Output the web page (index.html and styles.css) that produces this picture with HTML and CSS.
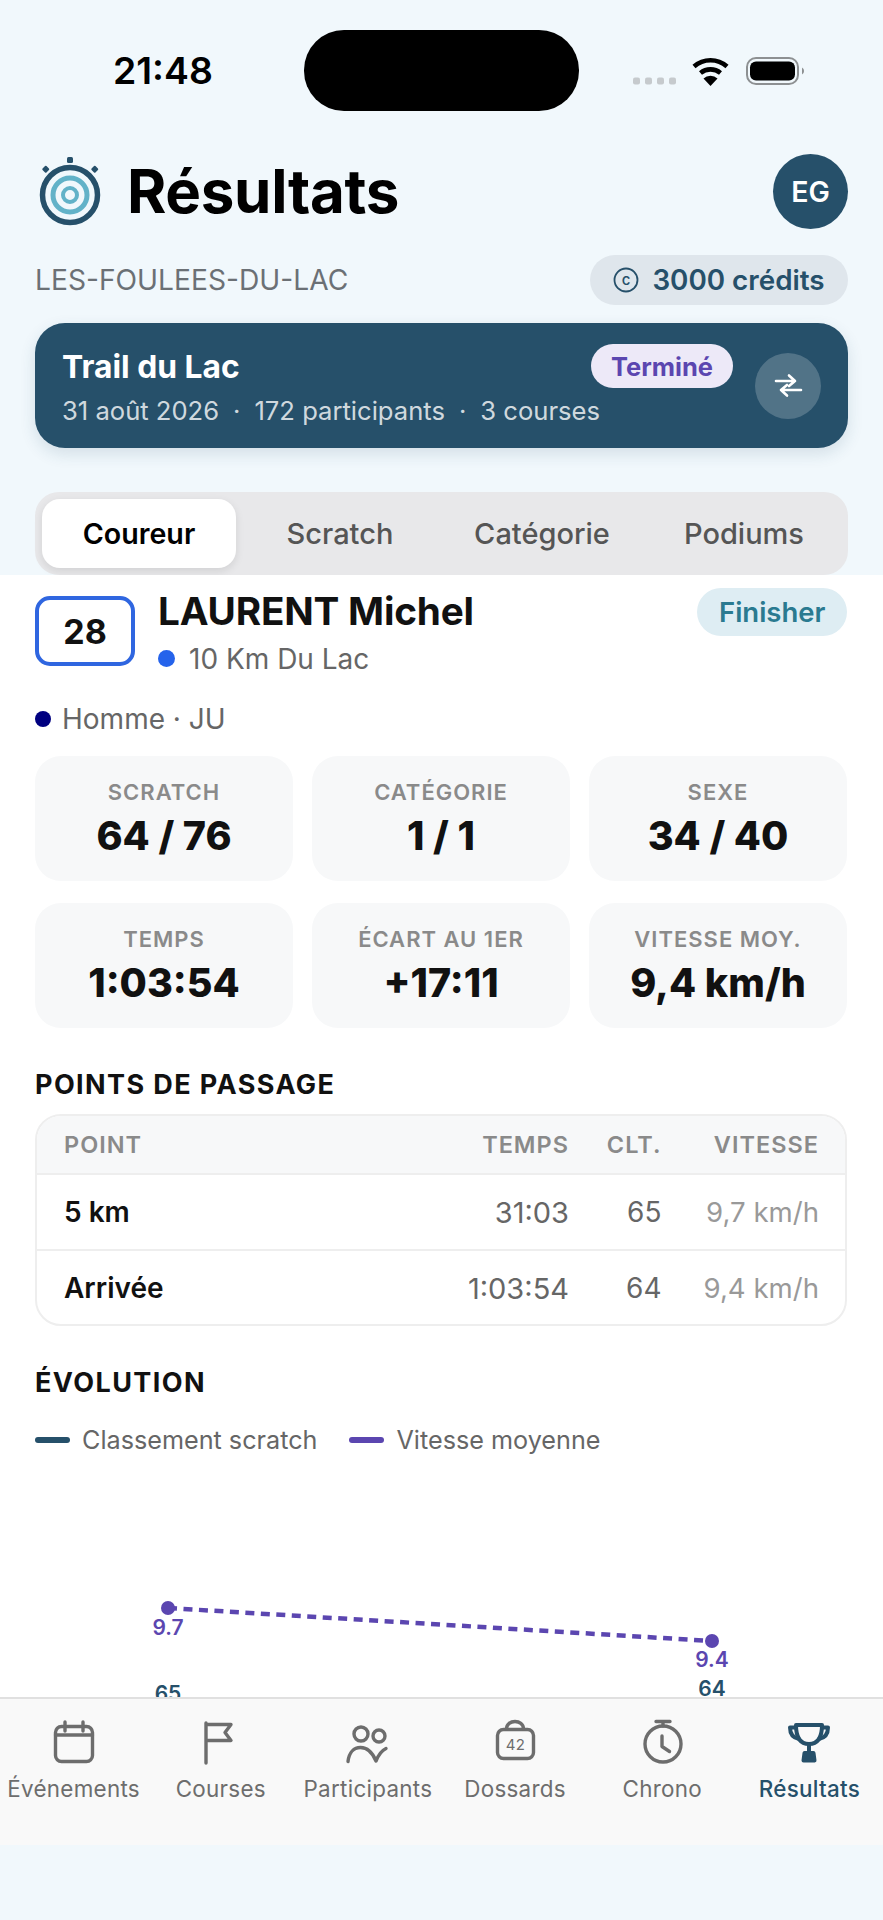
FILE: index.html
```html
<!DOCTYPE html>
<html lang="fr">
<head>
<meta charset="utf-8">
<title>Résultats</title>
<link rel="stylesheet" href="styles.css">
</head>
<body>
<div class="phone">
  <div class="island"></div>
  <section class="top">
    <div class="status">
      <span class="time">21:48</span>
      <svg class="status-icons" viewBox="630 50 180 40" width="180" height="40">
        <g fill="#c6cacd"><rect x="633" y="77.5" width="7" height="7" rx="2"/><rect x="645" y="77.5" width="7" height="7" rx="2"/><rect x="657" y="77.5" width="7" height="7" rx="2"/><rect x="669" y="77.5" width="7" height="7" rx="2"/></g>
        <g fill="none" stroke="#000" stroke-width="4.6"><path d="M694 66.5a25 25 0 0 1 33 0"/><path d="M700.5 73a15.5 15.5 0 0 1 20 0"/></g>
        <path d="M703.5 78.5a10 10 0 0 1 14 0L710.5 86z" fill="#000"/>
        <rect x="747" y="58" width="51" height="26" rx="9" fill="none" stroke="#8d9092" stroke-width="2"/>
        <rect x="750" y="61.500" width="45" height="19" rx="6" fill="#000"/>
        <path d="M802 67.500a4 4 0 0 1 0 7z" fill="#8d9092"/>
      </svg>
    </div>
    <header class="head">
      <svg class="logo" viewBox="35 150 70 80" width="70" height="80">
        <circle cx="70" cy="195" r="27.500" fill="none" stroke="#26506a" stroke-width="5.500"/>
        <circle cx="70" cy="195" r="17" fill="none" stroke="#62b2c8" stroke-width="5"/>
        <circle cx="70" cy="195" r="7" fill="none" stroke="#62b2c8" stroke-width="4"/>
        <rect x="67" y="157" width="6" height="6" rx="1.500" fill="#26506a"/>
        <rect x="43" y="166.500" width="5.500" height="5.500" rx="1" fill="#26506a" transform="rotate(45 45.750 169.250)"/>
        <rect x="92" y="166.500" width="5.500" height="5.500" rx="1" fill="#26506a" transform="rotate(45 94.750 169.250)"/>
      </svg>
      <h1 class="title">Résultats</h1>
      <div class="avatar">EG</div>
    </header>
    <div class="meta">
      <span class="slug">LES-FOULEES-DU-LAC</span>
      <span class="credits">
        <svg viewBox="0 0 26 26" width="26" height="26"><circle cx="13" cy="13" r="11.500" fill="none" stroke="#26506a" stroke-width="1.800"/><text x="13" y="18" text-anchor="middle" class="credit-c">c</text></svg>
        3000 crédits
      </span>
    </div>
    <div class="event">
      <div class="event-main">
        <div class="event-row">
          <span class="event-name">Trail du Lac</span>
          <span class="event-state">Terminé</span>
        </div>
        <div class="event-sub"><span>31 août 2026</span><span>·</span><span>172 participants</span><span>·</span><span>3 courses</span></div>
      </div>
      <div class="swap">
        <svg viewBox="0 0 30 26" width="30" height="26" fill="none" stroke="#fff" stroke-width="2.600" stroke-linecap="round" stroke-linejoin="round"><path d="M3 8h19M16 2.500l6 5.500-6 5"/><path d="M28 17H8M14 12l-6 5 6 5.500"/></svg>
      </div>
    </div>
    <nav class="tabs">
      <span class="tab active">Coureur</span>
      <span class="tab">Scratch</span>
      <span class="tab">Catégorie</span>
      <span class="tab">Podiums</span>
    </nav>
  </section>

  <main class="content">
    <div class="runner">
      <div class="bib">28</div>
      <div class="runner-info">
        <div class="runner-name">LAURENT Michel</div>
        <div class="runner-course"><i class="dot dot-blue"></i>10 Km Du Lac</div>
      </div>
      <span class="finisher">Finisher</span>
    </div>
    <div class="gender"><i class="dot dot-navy"></i>Homme · JU</div>

    <div class="stats">
      <div class="stat"><div class="stat-label">SCRATCH</div><div class="stat-value">64 / 76</div></div>
      <div class="stat"><div class="stat-label">CATÉGORIE</div><div class="stat-value">1 / 1</div></div>
      <div class="stat"><div class="stat-label">SEXE</div><div class="stat-value">34 / 40</div></div>
      <div class="stat"><div class="stat-label">TEMPS</div><div class="stat-value">1:03:54</div></div>
      <div class="stat"><div class="stat-label">ÉCART AU 1ER</div><div class="stat-value">+17:11</div></div>
      <div class="stat"><div class="stat-label">VITESSE MOY.</div><div class="stat-value">9,4 km/h</div></div>
    </div>

    <h2 class="section section-points">POINTS DE PASSAGE</h2>
    <div class="table">
      <div class="tr th"><span class="c1">POINT</span><span class="c2">TEMPS</span><span class="c3">CLT.</span><span class="c4">VITESSE</span></div>
      <div class="tr"><span class="c1">5 km</span><span class="c2">31:03</span><span class="c3">65</span><span class="c4">9,7 km/h</span></div>
      <div class="tr"><span class="c1">Arrivée</span><span class="c2">1:03:54</span><span class="c3">64</span><span class="c4">9,4 km/h</span></div>
    </div>

    <h2 class="section section-evo">ÉVOLUTION</h2>
    <div class="legend">
      <span class="legend-item"><i class="swatch swatch-rank"></i>Classement scratch</span>
      <span class="legend-item"><i class="swatch swatch-speed"></i>Vitesse moyenne</span>
    </div>
    <svg class="chart" viewBox="36 1470 811 240" width="811" height="240">
      <line x1="169" y1="1608" x2="713" y2="1641" class="speed-line"/>
      <circle cx="169" cy="1608" r="7" class="speed-dot"/>
      <circle cx="713" cy="1641" r="7" class="speed-dot"/>
      <text x="169" y="1635" class="speed-label">9.7</text>
      <text x="713" y="1667" class="speed-label">9.4</text>
      <text x="169" y="1701" class="rank-label">65</text>
      <text x="713" y="1696" class="rank-label">64</text>
    </svg>
  </main>

  <nav class="bottom">
    <div class="nav-item">
      <svg viewBox="46 1716 56 48" width="56" height="48" class="nav-icon"><rect x="55.500" y="1725.500" width="37" height="35" rx="6"/><path d="M55.500 1734h37M65 1721v9M83 1721v9"/></svg>
      <span>Événements</span>
    </div>
    <div class="nav-item">
      <svg viewBox="193 1716 56 48" width="56" height="48" class="nav-icon"><path d="M206 1722v40M206 1723.500h25l-6 8 6 8h-25"/></svg>
      <span>Courses</span>
    </div>
    <div class="nav-item">
      <svg viewBox="340 1716 56 48" width="56" height="48" class="nav-icon"><circle cx="361" cy="1733" r="7"/><circle cx="379" cy="1735" r="6"/><path d="M348 1760.500c1-9 6-14 12.500-14s12 5 15.500 13.500c2-5 5-10 10-12.500"/></svg>
      <span>Participants</span>
    </div>
    <div class="nav-item">
      <svg viewBox="487 1716 56 48" width="56" height="48" class="nav-icon"><rect x="497.500" y="1728.500" width="36" height="29" rx="6"/><path d="M506.500 1728c0-10 17-10 17 0"/><text x="515.500" y="1749" class="bib-num">42</text></svg>
      <span>Dossards</span>
    </div>
    <div class="nav-item">
      <svg viewBox="634 1716 56 48" width="56" height="48" class="nav-icon"><circle cx="663" cy="1743" r="18"/><path d="M656 1720.500h14M663 1721v4M662 1735v10.500l7.500 5"/></svg>
      <span>Chrono</span>
    </div>
    <div class="nav-item active">
      <svg viewBox="782 1716 56 48" width="56" height="48" class="nav-icon"><path d="M797 1724h26c0 11-3 19-13 19s-13-8-13-19z"/><path d="M797 1726.500h-6c0 7 4 10.500 9 11.500M823 1726.500h6c0 7-4 10.500-9 11.500M810 1743v9"/><path d="M805.500 1752h9l1 7.500h-11z" class="cup-base"/></svg>
      <span>Résultats</span>
    </div>
  </nav>
  <div class="home-strip"></div>
</div>
</body>
</html>
```
FILE: styles.css
```css
* { box-sizing: border-box; margin: 0; padding: 0; }
html, body { background: #f1f8fc; }
body { font-family: Inter, "Noto Sans", sans-serif; color: #111; }
.phone { position: relative; width: 883px; height: 1920px; overflow: hidden; display: flex; flex-direction: column; }
.island { position: absolute; left: 304px; top: 30px; width: 275px; height: 81px; border-radius: 40px; background: #000; }

.top { height: 575px; flex: none; background: #f1f8fc; padding: 0 35px 0 35px; overflow: hidden; }
.status { height: 154px; position: relative; }
.time { position: absolute; left: 78px; top: 48px; font-size: 37.400px; line-height: 46px; font-weight: 600; color: #000; }
.status-icons { position: absolute; left: 595px; top: 50px; }

.head { height: 75px; display: flex; align-items: center; }
.logo { flex: none; margin-top: -3px; }
.title { font-size: 60px; line-height: 75px; font-weight: 700; color: #000; margin-left: 22px; flex: 1; letter-spacing: -.3px; }
.avatar { width: 75px; height: 75px; border-radius: 50%; background: #26506a; color: #fff; display: flex; align-items: center; justify-content: center; font-size: 28.500px; font-weight: 600; }

.meta { margin-top: 26px; height: 50px; display: flex; justify-content: space-between; align-items: center; }
.slug { font-size: 28.200px; color: #6b7075; }
.credits { height: 50px; width: 258px; border-radius: 25px; background: #dfe6ec; color: #26506a; font-size: 27.800px; font-weight: 600; display: flex; align-items: center; justify-content: center; gap: 13px; }
.credit-c { font-size: 15px; font-weight: 500; text-anchor: middle; fill: #26506a; }

.event { margin-top: 18px; height: 125px; border-radius: 30px; background: #26506a; padding: 0 27px; display: flex; align-items: center; gap: 22px; box-shadow: 0 6px 16px rgba(38, 80, 106, .14); }
.event-main { flex: 1; padding-top: 1px; }
.event-row { display: flex; justify-content: space-between; align-items: center; height: 44px; }
.event-name { font-size: 31.800px; font-weight: 700; color: #fff; }
.event-state { height: 44px; border-radius: 22px; padding: 0 20px; background: #ede9f8; color: #5b46b0; font-size: 25.500px; font-weight: 700; display: flex; align-items: center; }
.event-sub { margin-top: 6px; display: flex; gap: 14px; font-size: 25.600px; line-height: 34px; color: rgba(255, 255, 255, .8); }
.swap { flex: none; width: 66px; height: 66px; border-radius: 50%; background: rgba(255, 255, 255, .2); display: flex; align-items: center; justify-content: center; }

.tabs { margin-top: 44px; height: 83px; border-radius: 24px; background: #e8e8ea; padding: 7px; display: flex; }
.tab { flex: none; width: 202px; height: 69px; display: flex; align-items: center; justify-content: center; font-size: 29px; font-weight: 500; color: #555; }
.tab.active { width: 194px; margin-right: 3px; background: #fff; border-radius: 18px; color: #000; font-weight: 600; font-size: 28.600px; box-shadow: 0 3px 8px rgba(0, 0, 0, .1); }

.content { flex: 1; min-height: 0; overflow: hidden; background: #fff; padding: 13px 36px 0 35px; }
.runner { display: flex; align-items: flex-start; }
.bib { flex: none; margin-top: 8px; width: 100px; height: 70px; border: 4px solid #2f66e0; border-radius: 15px; display: flex; align-items: center; justify-content: center; font-size: 34px; font-weight: 700; color: #111; }
.runner-info { flex: 1; margin-left: 23px; }
.runner-name { font-size: 38.700px; line-height: 46px; font-weight: 700; color: #111; letter-spacing: -.2px; }
.runner-course { margin-top: 7.500px; font-size: 28px; line-height: 34px; color: #666; display: flex; align-items: center; }
.dot { display: block; flex: none; border-radius: 50%; }
.dot-blue { width: 17px; height: 17px; background: #2563eb; margin-right: 14px; }
.dot-navy { width: 16px; height: 16px; background: #000080; margin-right: 11px; }
.finisher { flex: none; height: 48px; border-radius: 24px; background: #deedf3; color: #2a7a90; padding: 0 21.500px; font-size: 27.500px; font-weight: 600; display: flex; align-items: center; }
.gender { margin-top: 26px; height: 34px; display: flex; align-items: center; font-size: 28px; color: #666; }

.stats { margin-top: 20.500px; display: grid; grid-template-columns: repeat(3, 258px); column-gap: 19px; row-gap: 22px; }
.stat { height: 125px; border-radius: 26px; background: #f7f8f9; text-align: center; padding-top: 22px; }
.stat-label { font-size: 22px; line-height: 28px; font-weight: 600; letter-spacing: 1px; color: #8a8a8a; }
.stat-value { margin-top: 6px; font-size: 39.500px; line-height: 48px; font-weight: 800; color: #111; }

.section { font-size: 27px; line-height: 34px; font-weight: 700; letter-spacing: 1.400px; color: #111; }
.section-points { margin-top: 40px; }
.section-evo { margin-top: 40px; }

.table { margin-top: 12px; height: 212px; border: 2px solid #eee; border-radius: 26px; overflow: hidden; }
.tr { height: 76px; display: flex; align-items: center; padding: 0 26px 0 27px; font-size: 28px; border-top: 2px solid #eee; }
.tr.th { height: 57px; border-top: 0; background: #f7f8f9; font-size: 23.500px; font-weight: 600; letter-spacing: 1px; color: #8a8a8a; }
.c1 { flex: 1; font-weight: 600; color: #111; }
.c2 { width: 200px; text-align: right; color: #666; font-size: 29px; }
.c3 { width: 92.500px; text-align: right; color: #666; }
.c4 { width: 157.500px; text-align: right; color: #999; font-size: 27.600px; }
.th .c1, .th .c2, .th .c3, .th .c4 { color: #8a8a8a; font-size: 23.500px; }

.legend { margin-top: 22px; display: flex; gap: 32px; height: 36px; align-items: center; font-size: 25.200px; color: #666; }
.legend-item { display: flex; align-items: center; gap: 12px; }
.swatch { display: block; width: 35px; height: 6px; border-radius: 3px; }
.swatch-rank { background: #26506a; }
.swatch-speed { background: #5b46b0; }

.chart { display: block; margin-top: 12px; }
.speed-line { stroke: #5b46b0; stroke-width: 4.500; stroke-dasharray: 9 6.500; }
.speed-dot { fill: #5b46b0; }
.speed-label { font-size: 21px; font-weight: 600; fill: #5b46b0; text-anchor: middle; }
.rank-label { font-size: 21px; font-weight: 600; fill: #26506a; text-anchor: middle; }

.bottom { flex: none; height: 148px; background: #f9f9f9; border-top: 2px solid #e0e0e0; padding-top: 18px; display: flex; }
.nav-item { flex: 1; display: flex; flex-direction: column; align-items: center; font-size: 22.400px; line-height: 30px; letter-spacing: .3px; color: #6d6d6d; white-space: nowrap; }
.nav-item span { margin-top: 9px; }
.nav-item.active { color: #26506a; font-weight: 500; }
.nav-icon { display: block; flex: none; fill: none; stroke: #6d6d6d; stroke-width: 3.400; stroke-linecap: round; stroke-linejoin: round; }
.active .nav-icon { stroke: #26506a; stroke-width: 4; }
.cup-base { fill: #26506a; }
.bib-num { font-size: 15px; fill: #6d6d6d; stroke: none; text-anchor: middle; }
.home-strip { flex: none; height: 75px; background: #f1f8fc; }
```
